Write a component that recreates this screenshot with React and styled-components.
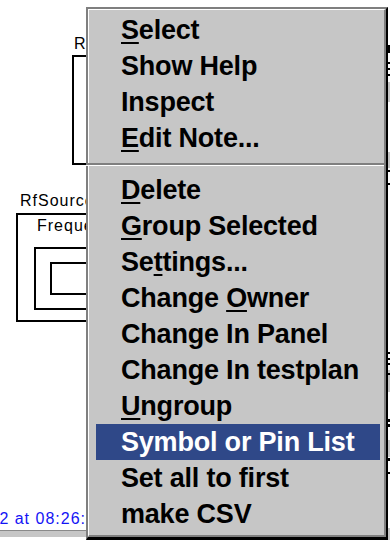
import React from 'react';
import styled, { createGlobalStyle } from 'styled-components';

const GlobalStyle = createGlobalStyle`
	body {
		margin: 0;
		background: #fff;
		overflow: hidden;
	}
`;

const items = [
	{ pre: '', key: 'S', post: 'elect' },
	{ pre: 'Show Help' },
	{ pre: 'Inspect' },
	{ pre: '', key: 'E', post: 'dit Note...' },
	'sep',
	{ pre: '', key: 'D', post: 'elete' },
	{ pre: '', key: 'G', post: 'roup Selected' },
	{ pre: 'Se', key: 't', post: 'tings...' },
	{ pre: 'Change ', key: 'O', post: 'wner' },
	{ pre: 'Change In Panel' },
	{ pre: 'Change In testplan' },
	{ pre: '', key: 'U', post: 'ngroup' },
	{ pre: 'Symbol or Pin List', active: true },
	{ pre: 'Set all to first' },
	{ pre: 'make CSV' },
];

// little bits of diagram peeking out right of the menu
const edgeMarks = [
	[45, 8, '#000'], [62, 2, '#000'], [68, 2, '#000'], [74, 2, '#000'],
	[82, 20, '#c6c6c6'], [152, 16, '#c6c6c6'], [170, 2, '#000'], [183, 2, '#000'],
	[352, 2, '#000'], [358, 2, '#000'], [363, 2, '#000'], [370, 22, '#c6c6c6'],
	[373, 2, '#000'], [419, 3, '#000'], [424, 3, '#000'], [440, 17, '#c6c6c6'],
	[458, 3, '#000'], [472, 2, '#000'], [528, 12, '#c6c6c6'],
];

const App = () => (
	<>
		<GlobalStyle />
		<Screen>
			<Label $x={74} $y={36}>R</Label>
			<Block $x={72} $y={55} $w={200} $h={110} />

			<Label $x={20} $y={193}>RfSource</Label>
			<Block $x={16} $y={213} $w={200} $h={109}>
				<Label $x={19} $y={3}>Frequency</Label>
			</Block>
			<Block $x={34} $y={247} $w={200} $h={63} />
			<Block $x={50} $y={262} $w={200} $h={33} />

			<Status>
				<StatusText>Modified 3/12/2002 at 08:26:</StatusText>
			</Status>
			<ScrollStrip />

			<EdgeStrip>
				{edgeMarks.map(([y, h, c], i) => (
					<Mark key={i} style={{ top: y, height: h, background: c }} />
				))}
			</EdgeStrip>

			<Menu>
				<MenuInner>
					{items.map((item, i) => {
						if (item === 'sep') return <Separator key={i} />;
						return (
							<MenuItem key={i} $active={item.active}>
								{item.pre}
								{item.key && <Access>{item.key}</Access>}
								{item.post}
							</MenuItem>
						);
					})}
				</MenuInner>
			</Menu>
		</Screen>
	</>
);

const Screen = styled.div`
	position: relative;
	width: 390px;
	height: 540px;
	overflow: hidden;
	background: #fff;
	font-family: 'Liberation Sans', Arial, sans-serif;
`;

const Label = styled.div`
	position: absolute;
	left: ${p => p.$x}px;
	top: ${p => p.$y}px;
	font-size: 16px;
	letter-spacing: 1px;
	line-height: 16px;
	color: #000;
	white-space: nowrap;
`;

const Block = styled.div`
	position: absolute;
	left: ${p => p.$x}px;
	top: ${p => p.$y}px;
	width: ${p => p.$w}px;
	height: ${p => p.$h}px;
	border: 2px solid #000;
	box-sizing: border-box;
`;

const Status = styled.div`
	position: absolute;
	left: 0;
	top: 510px;
	width: 86px;
	display: flex;
	justify-content: flex-end;
	overflow: hidden;
`;

const StatusText = styled.span`
	font-size: 16px;
	letter-spacing: 1px;
	line-height: 18px;
	color: #1414f5;
	white-space: nowrap;
`;

const ScrollStrip = styled.div`
	position: absolute;
	left: 0;
	top: 530px;
	width: 90px;
	height: 6px;
	background: #c6c6c6;
	border-top: 1px solid #8a8a8a;
`;

const EdgeStrip = styled.div`
	position: absolute;
	left: 388px;
	top: 0;
	width: 2px;
	height: 540px;
`;

const Mark = styled.div`
	position: absolute;
	left: 0;
	width: 2px;
`;

const Menu = styled.div`
	position: absolute;
	left: 86px;
	top: 7px;
	width: 302px;
	height: 533px;
	box-sizing: border-box;
	border-style: solid;
	border-width: 2px 2px 3px 2px;
	border-color: #7f7f7f #000 #000 #7f7f7f;
`;

const MenuInner = styled.div`
	height: 100%;
	box-sizing: border-box;
	background: #c6c6c6;
	border-style: solid;
	border-width: 1px 2px 2px 1px;
	border-color: #fff #7f7f7f #7f7f7f #fff;
	padding-top: 2px;
	display: flex;
	flex-direction: column;
`;

const MenuItem = styled.div`
	height: 36px;
	line-height: 36px;
	font-size: 27px;
	font-weight: bold;
	letter-spacing: -0.2px;
	white-space: nowrap;
	color: ${p => (p.$active ? '#fff' : '#000')};
	background: ${p => (p.$active ? '#2f4888' : 'transparent')};
	margin: ${p => (p.$active ? '0 4px 0 7px' : '0')};
	padding-left: ${p => (p.$active ? '25px' : '32px')};
`;

const Access = styled.span`
	text-decoration: underline;
	text-decoration-thickness: 2px;
	text-underline-offset: 3px;
`;

const Separator = styled.div`
	margin: 7px 0 6px -3px;
	border-top: 2px solid #7f7f7f;
	border-bottom: 1px solid #fff;
`;

export default App;
